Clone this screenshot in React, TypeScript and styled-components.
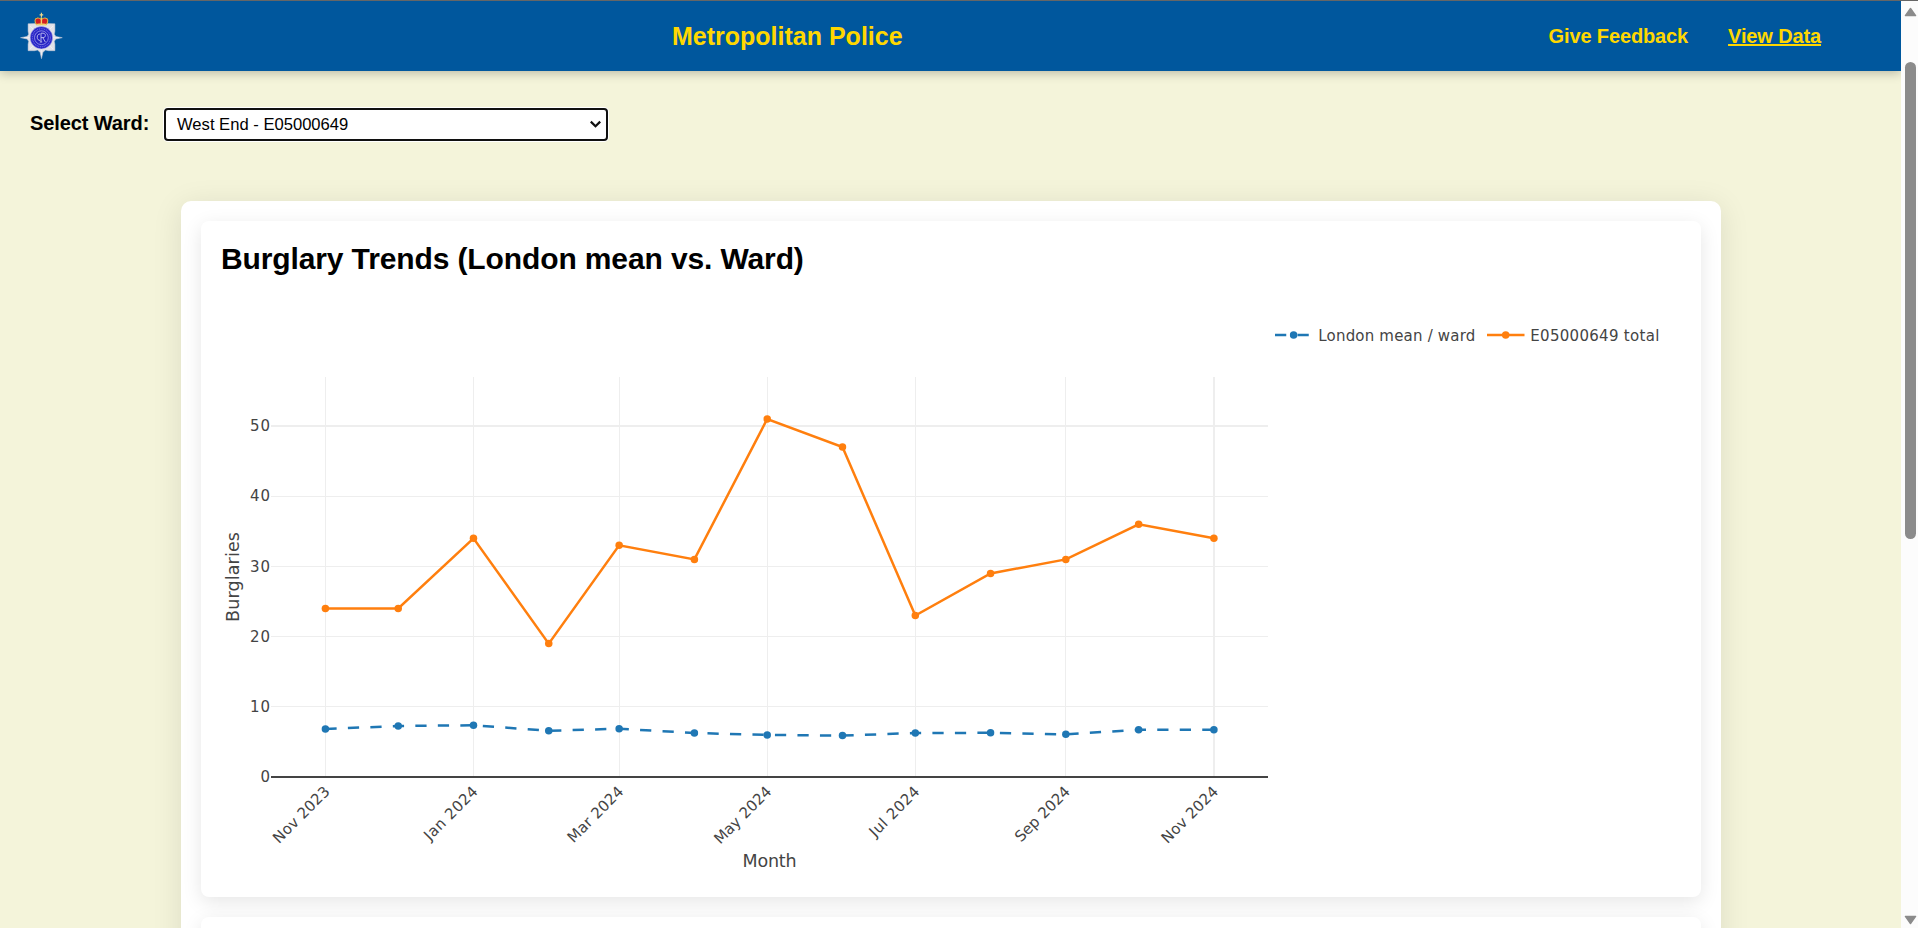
import React from "react";
import styled, { createGlobalStyle } from "styled-components";

const GlobalStyle = createGlobalStyle`
  * { box-sizing: border-box; }
  html, body { margin: 0; padding: 0; height: 100%; overflow: hidden; }
  body { background: #f4f4da; font-family: Arial, "Liberation Sans", sans-serif; color: #000; }
`;

const Window = styled.div`
  display: flex;
  height: 928px;
  width: 100%;
  border-top: 1px solid #666;
  overflow: hidden;
`;

const Page = styled.div`
  flex: 1;
  min-width: 0;
  display: flex;
  flex-direction: column;
  overflow: hidden;
`;

const Header = styled.header`
  flex: none;
  display: flex;
  align-items: center;
  height: 70px;
  padding: 0 80px 0 20px;
  background: #00579d;
  box-shadow: 0 2px 10px rgba(0, 0, 0, 0.25);
`;

const Crest = styled.svg`
  flex: none;
  display: block;
  width: 43px;
  height: 50px;
`;

const SiteTitle = styled.h1`
  margin: 0 auto 0 609px;
  font-size: 25px;
  line-height: 30px;
  white-space: nowrap;
  color: #ffd700;
`;

const Nav = styled.nav`
  display: flex;
  gap: 40px;
`;

const NavLink = styled.a<{ $active?: boolean }>`
  font-size: 20px;
  line-height: 24px;
  font-weight: bold;
  letter-spacing: -0.13px;
  white-space: nowrap;
  color: #ffd700;
  text-decoration: ${(p) => (p.$active ? "underline" : "none")};
`;

const FilterBar = styled.div`
  flex: none;
  display: flex;
  align-items: center;
  gap: 14px;
  height: 34px;
  margin: 36px 0 60px 30px;
`;

const FilterLabel = styled.label`
  width: 120px;
  padding-bottom: 2px;
  font-size: 20px;
  line-height: 24px;
  font-weight: bold;
  letter-spacing: -0.1px;
  white-space: nowrap;
`;

const WardSelect = styled.button`
  display: flex;
  align-items: center;
  justify-content: space-between;
  width: 444px;
  height: 33px;
  padding: 1px 4px 0 11px;
  border: 2px solid #101010;
  border-radius: 4px;
  background: #fff;
  box-shadow: 0 0 0 1px #fff;
  font: 16.6px/20px Arial, "Liberation Sans", sans-serif;
  color: #000;
`;

const Panel = styled.main`
  flex: none;
  display: flex;
  flex-direction: column;
  gap: 20px;
  width: 1540px;
  height: 1200px;
  margin-left: 181px;
  padding: 20px;
  border-radius: 10px;
  background: #fff;
  box-shadow: 0 5px 30px rgba(0, 0, 0, 0.1);
`;

const Card = styled.section<{ $height: number }>`
  height: ${(p) => p.$height}px;
  padding: 20px;
  border-radius: 8px;
  background: #fff;
  box-shadow: 0 5px 19px rgba(0, 0, 0, 0.1);
`;

const CardTitle = styled.h2`
  margin: 0;
  font-size: 30px;
  line-height: 36px;
  letter-spacing: -0.12px;
`;

const Chart = styled.svg`
  display: block;
  width: 1440px;
  height: 600px;
  font-family: Verdana, "DejaVu Sans", sans-serif;
  fill: #444;
`;

const Scrollbar = styled.aside`
  flex: none;
  display: flex;
  flex-direction: column;
  align-items: center;
  width: 17px;
  padding: 6px 0 3px 2px;
  background: #fcfcfc;
`;

const Thumb = styled.div`
  width: 11px;
  height: 477px;
  margin: 45px 0 auto;
  border-radius: 6px;
  background: #8b8b8b;
`;

const ScrollArrow = styled.svg`
  flex: none;
  display: block;
  width: 13px;
  height: 10px;
`;

const days = [0, 30, 61, 92, 121, 152, 182, 213, 243, 274, 305, 335, 366];
const wardTotals = [24, 24, 34, 19, 33, 31, 51, 47, 23, 29, 31, 36, 34];
const londonMeans = [6.83, 7.27, 7.37, 6.58, 6.88, 6.27, 5.99, 5.9, 6.27, 6.29, 6.08, 6.73, 6.73];
const ticks = [
  { day: 0, label: "Nov 2023", length: 73 },
  { day: 61, label: "Jan 2024", length: 69 },
  { day: 121, label: "Mar 2024", length: 72 },
  { day: 182, label: "May 2024", length: 74 },
  { day: 243, label: "Jul 2024", length: 64 },
  { day: 305, label: "Sep 2024", length: 71 },
  { day: 366, label: "Nov 2024", length: 73 },
];

const sx = (day: number) => 325.4 + day * 2.4276;
const sy = (value: number) => 777 - value * 7.02;
const linePath = (values: number[]) =>
  values.map((v, i) => `${i ? "L" : "M"}${sx(days[i]).toFixed(2)},${sy(v).toFixed(2)}`).join("");

function Series({ values, color, dash }: { values: number[]; color: string; dash?: string }) {
  return (
    <g>
      <path d={linePath(values)} fill="none" stroke={color} strokeWidth={2.5} strokeDasharray={dash} />
      {values.map((v, i) => (
        <circle key={i} cx={sx(days[i])} cy={sy(v)} r={3.75} fill={color} />
      ))}
    </g>
  );
}

function TrendChart() {
  return (
    <Chart viewBox="221 277 1440 600">
      <g fill="#eee">
        {ticks.map((t) => {
          const wide = t.day === 366;
          return (
            <rect key={t.day} x={wide ? 1213 : Math.floor(sx(t.day))} y={377} width={wide ? 2 : 1} height={399} />
          );
        })}
        {[10, 20, 30, 40].map((v) => (
          <rect key={v} x={271} y={496 + (40 - v) * 7} width={997} height={1} />
        ))}
        <rect x={271} y={425} width={997} height={2} />
      </g>
      <rect x={271} y={776} width={997} height={2} fill="#444" />
      <Series values={londonMeans} color="#1f77b4" dash="11.25 11.25" />
      <Series values={wardTotals} color="#ff7f0e" />
      <g fontSize={15}>
        {[0, 10, 20, 30, 40, 50].map((v) => (
          <text key={v} x={270} y={Math.round(sy(v) + 5.2)} textAnchor="end" textLength={v ? 20 : 10}>
            {v}
          </text>
        ))}
        {ticks.map((t) => {
          const x = sx(t.day) + 5.3;
          return (
            <text
              key={t.day}
              x={x}
              y={792.5}
              textAnchor="end"
              textLength={t.length}
              transform={`rotate(-45 ${x} 792.5)`}
            >
              {t.label}
            </text>
          );
        })}
        <path d="M1275,335h37.5" stroke="#1f77b4" strokeWidth={2.5} strokeDasharray="11.25 11.25" />
        <circle cx={1293.6} cy={335} r={3.75} fill="#1f77b4" />
        <text x={1318.3} y={341} textLength={157}>London mean / ward</text>
        <path d="M1487,335h37.5" stroke="#ff7f0e" strokeWidth={2.5} />
        <circle cx={1505.7} cy={335} r={3.75} fill="#ff7f0e" />
        <text x={1530.3} y={341} textLength={129}>E05000649 total</text>
      </g>
      <g fontSize={17.5}>
        <text x={769.5} y={866.5} textAnchor="middle" textLength={54}>Month</text>
        <text x={239} y={577} textAnchor="middle" textLength={90} transform="rotate(-90 239 577)">
          Burglaries
        </text>
      </g>
    </Chart>
  );
}

function PoliceCrest() {
  return (
    <Crest viewBox="20 11 43 50" aria-label="Metropolitan Police crest">
      <path
        d="M41.5 19l3.2 5.4 2.6-.8 7.6.2v7.4l-.6 3 1.6 2.2 6.4 1.3-6.4 1.3-1.6 2.3.6 3v6.4h-6.4l-3-.6-2.6 2.2-1.4 6.4-1.4-6.4-2.6-2.2-3 .6h-6.4v-6.4l.6-3-1.6-2.3-6.6-1.3 6.6-1.3 1.6-2.2-.6-3v-7.4l7.6-.2 2.6.8z"
        fill="#e2e2e8"
        stroke="#c9cdd8"
        strokeWidth=".5"
      />
      <path d="M30 26l23 23M53 26L30 49M24 37.7h35M41.4 24v31" stroke="#fff" strokeWidth=".8" opacity=".6" />
      <circle cx="41.4" cy="37.7" r="11.2" fill="#2824c8" stroke="#b9b9e8" strokeWidth=".5" />
      <circle cx="41.4" cy="37.7" r="9" fill="none" stroke="#8d8ce8" strokeWidth="1.2" strokeDasharray="1 .8" opacity=".6" />
      <circle cx="41.4" cy="37.7" r="6.9" fill="#2420c0" stroke="#9f9eec" strokeWidth=".8" />
      <path
        d="M41 42v-8.8h2c3.2 0 3.2 4.4 0 4.4h-2M42.8 37.6l2.5 4.4M40.2 34c-4-.4-4 6.8 0 6.4M39.8 42h2.4"
        fill="none"
        stroke="#c3c2f3"
        strokeWidth=".9"
      />
      <path d="M36.6 24.8c-2.3-3.2-2-6.2.5-6.7 1.6-.4 2.9.2 4.3 1.4 1.4-1.2 2.7-1.8 4.3-1.4 2.5.5 2.8 3.5.5 6.7z" fill="#d51d22" stroke="#d8b348" strokeWidth="1.1" />
      <path d="M41.4 17.5v6M36.4 24.6q5-1.3 10 0" fill="none" stroke="#f2d36b" strokeWidth="1.4" />
      <path d="M41.4 12.8v4.8M39.6 14.9h3.6" stroke="#eedb8c" strokeWidth="1.1" />
    </Crest>
  );
}

export default function App() {
  return (
    <>
      <GlobalStyle />
      <Window>
        <Page>
          <Header>
            <PoliceCrest />
            <SiteTitle>Metropolitan Police</SiteTitle>
            <Nav>
              <NavLink>Give Feedback</NavLink>
              <NavLink $active>View Data</NavLink>
            </Nav>
          </Header>
          <FilterBar>
            <FilterLabel>Select Ward:</FilterLabel>
            <WardSelect>
              West End - E05000649
              <svg width="13" height="9" viewBox="0 0 13 9">
                <path d="M1.8 1.6l4.7 4.7 4.7-4.7" fill="none" stroke="#101010" strokeWidth="2.2" />
              </svg>
            </WardSelect>
          </FilterBar>
          <Panel>
            <Card $height={676}>
              <CardTitle>Burglary Trends (London mean vs. Ward)</CardTitle>
              <TrendChart />
            </Card>
            <Card $height={400} />
          </Panel>
        </Page>
        <Scrollbar>
          <ScrollArrow viewBox="0 0 13 10">
            <path d="M6.5 1.5L11.6 8.6H1.4z" fill="#8b8b8b" stroke="#8b8b8b" strokeWidth="1.4" strokeLinejoin="round" />
          </ScrollArrow>
          <Thumb />
          <ScrollArrow viewBox="0 0 13 10">
            <path d="M6.5 8.5L11.6 1.4H1.4z" fill="#8b8b8b" stroke="#8b8b8b" strokeWidth="1.4" strokeLinejoin="round" />
          </ScrollArrow>
        </Scrollbar>
      </Window>
    </>
  );
}
